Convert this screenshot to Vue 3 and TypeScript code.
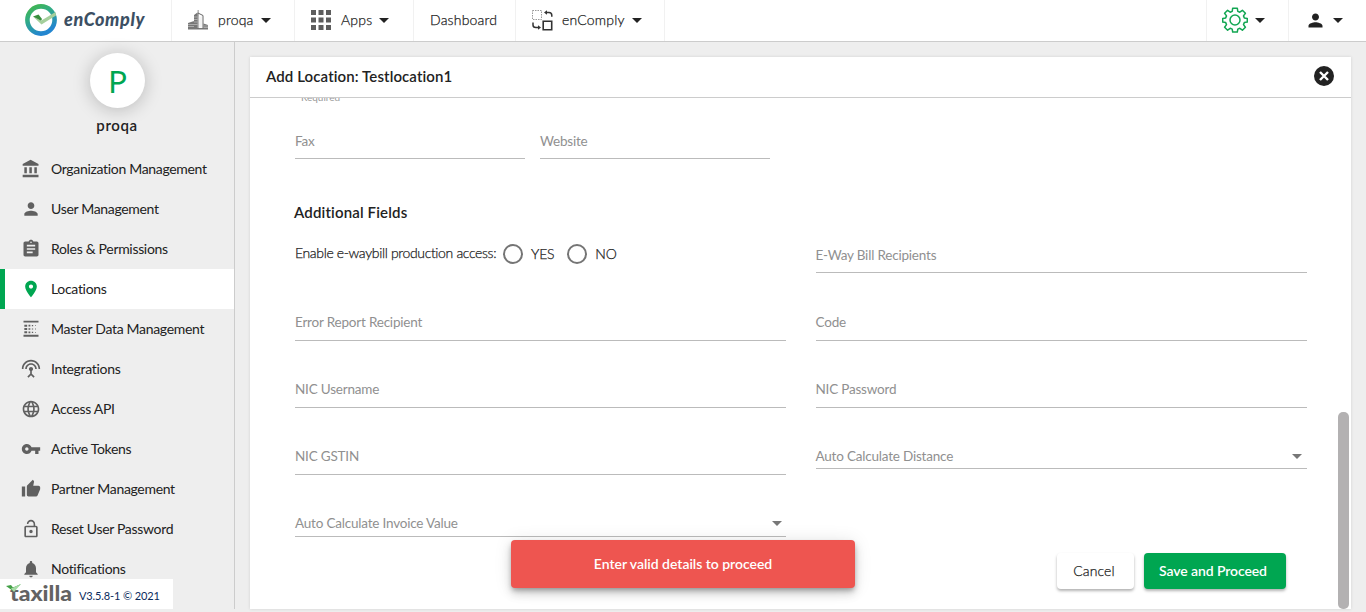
<script setup lang="ts">
interface NavItem { label: string; icon: string; active?: boolean }
interface Field { label: string; select?: boolean }

const navItems: NavItem[] = [
  { label: 'Organization Management', icon: 'bank' },
  { label: 'User Management', icon: 'user' },
  { label: 'Roles & Permissions', icon: 'clipboard' },
  { label: 'Locations', icon: 'pin', active: true },
  { label: 'Master Data Management', icon: 'data' },
  { label: 'Integrations', icon: 'antenna' },
  { label: 'Access API', icon: 'globe' },
  { label: 'Active Tokens', icon: 'key' },
  { label: 'Partner Management', icon: 'thumb' },
  { label: 'Reset User Password', icon: 'lock' },
  { label: 'Notifications', icon: 'bell' },
]

const icons: Record<string, string> = {
  bank: 'M4 10v7h3v-7H4zm6 0v7h3v-7h-3zM2 22h19v-3H2v3zm14-12v7h3v-7h-3zm-4.500-9L2 6v2h19V6l-9.500-5z',
  user: 'M12 12c2.210 0 4-1.790 4-4s-1.790-4-4-4-4 1.790-4 4 1.790 4 4 4zm0 2c-2.670 0-8 1.340-8 4v2h16v-2c0-2.660-5.330-4-8-4z',
  clipboard: 'M19 3h-4.180C14.400 1.840 13.300 1 12 1c-1.300 0-2.400.84-2.820 2H5c-1.100 0-2 .9-2 2v14c0 1.100.9 2 2 2h14c1.100 0 2-.9 2-2V5c0-1.100-.9-2-2-2zm-7 0c.55 0 1 .45 1 1s-.45 1-1 1-1-.45-1-1 .45-1 1-1zm2 14H7v-2h7v2zm3-4H7v-2h10v2zm0-4H7V7h10v2z',
  pin: 'M12 2C8.130 2 5 5.130 5 9c0 5.250 7 13 7 13s7-7.750 7-13c0-3.870-3.130-7-7-7zm0 9.500c-1.380 0-2.500-1.120-2.500-2.500s1.120-2.500 2.500-2.500 2.500 1.120 2.500 2.500-1.120 2.500-2.500 2.500z',
  data: 'M3 2h18v2.200H3zM3 19h18v2.200H3zM4 6.800h3.400v2.400H4zM4 10.800h3.400v2.400H4zM4 14.800h3.400v2.400H4zM9 7h2.200v2H9zM9 11h2.200v2H9zM9 15h2.200v2H9zM13 7.300h1.600v1.400H13zM13 11.300h1.600v1.400H13zM13 15.300h1.600v1.400H13zM17 7.500h1v1h-1zM17 11.500h1v1h-1zM17 15.500h1v1h-1z',
  antenna: 'M12 5c-3.870 0-7 3.130-7 7h2c0-2.760 2.240-5 5-5s5 2.240 5 5h2c0-3.870-3.130-7-7-7zm1 9.290c.88-.39 1.500-1.260 1.500-2.290 0-1.380-1.120-2.500-2.500-2.500S9.500 10.620 9.500 12c0 1.020.62 1.900 1.500 2.290v3.300L7.590 21 9 22.410l3-3 3 3L16.410 21 13 17.590v-3.300zM12 1C5.930 1 1 5.930 1 12h2c0-4.970 4.030-9 9-9s9 4.030 9 9h2c0-6.070-4.930-11-11-11z',
  globe: 'M11.990 2C6.470 2 2 6.480 2 12s4.470 10 9.990 10C17.520 22 22 17.520 22 12S17.520 2 11.990 2zm6.930 6h-2.950c-.32-1.250-.78-2.450-1.380-3.560 1.840.63 3.370 1.910 4.330 3.560zM12 4.040c.83 1.200 1.480 2.530 1.910 3.960h-3.820c.43-1.430 1.080-2.760 1.910-3.960zM4.260 14C4.100 13.360 4 12.690 4 12s.1-1.360.26-2h3.380c-.08.66-.14 1.320-.14 2s.06 1.340.14 2H4.260zm.82 2h2.950c.32 1.250.78 2.450 1.380 3.560-1.840-.63-3.370-1.900-4.330-3.560zm2.950-8H5.080c.96-1.660 2.490-2.930 4.330-3.560C8.810 5.550 8.350 6.750 8.030 8zM12 19.960c-.83-1.200-1.480-2.530-1.910-3.960h3.820c-.43 1.430-1.080 2.760-1.910 3.960zM14.340 14H9.660c-.09-.66-.16-1.320-.16-2s.07-1.350.16-2h4.680c.09.65.16 1.320.16 2s-.07 1.340-.16 2zm.25 5.560c.6-1.110 1.060-2.310 1.380-3.560h2.950c-.96 1.650-2.490 2.930-4.330 3.560zM16.360 14c.08-.66.14-1.320.14-2s-.06-1.340-.14-2h3.380c.16.64.26 1.310.26 2s-.1 1.360-.26 2h-3.380z',
  key: 'M12.650 10C11.830 7.670 9.610 6 7 6c-3.310 0-6 2.690-6 6s2.690 6 6 6c2.610 0 4.830-1.670 5.650-4H17v4h4v-4h2v-4H12.650zM7 14c-1.100 0-2-.9-2-2s.9-2 2-2 2 .9 2 2-.9 2-2 2z',
  thumb: 'M1 21h4V9H1v12zm22-11c0-1.100-.9-2-2-2h-6.310l.95-4.570.03-.32c0-.41-.17-.79-.44-1.060L14.170 1 7.590 7.590C7.220 7.950 7 8.450 7 9v10c0 1.100.9 2 2 2h9c.83 0 1.540-.5 1.840-1.220l3.020-7.050c.09-.23.14-.47.14-.73v-2z',
  lock: 'M12 17c1.100 0 2-.9 2-2s-.9-2-2-2-2 .9-2 2 .9 2 2 2zm6-9h-1V6c0-2.760-2.240-5-5-5S7 3.240 7 6h1.900c0-1.710 1.390-3.100 3.100-3.100 1.710 0 3.100 1.390 3.100 3.100v2H6c-1.100 0-2 .9-2 2v10c0 1.100.9 2 2 2h12c1.100 0 2-.9 2-2V10c0-1.100-.9-2-2-2zm0 12H6V10h12v10z',
  bell: 'M12 22c1.100 0 2-.9 2-2h-4c0 1.100.9 2 2 2zm6-6v-5c0-3.070-1.640-5.640-4.500-6.320V4c0-.83-.67-1.500-1.500-1.500s-1.500.67-1.500 1.500v.68C7.630 5.360 6 7.920 6 11v5l-2 2v1h16v-1l-2-2z',
}

const leftFields: Field[] = [
  { label: 'Error Report Recipient' },
  { label: 'NIC Username' },
  { label: 'NIC GSTIN' },
  { label: 'Auto Calculate Invoice Value', select: true },
]
const rightFields: Field[] = [
  { label: 'E-Way Bill Recipients' },
  { label: 'Code' },
  { label: 'NIC Password' },
  { label: 'Auto Calculate Distance', select: true },
]
</script>

<template>
  <div class="page">
    <header class="topbar">
      <div class="brand">
        <svg class="brand-mark" width="33" height="32" viewBox="0 0 33 32">
          <defs>
            <linearGradient id="ring" x1="0" y1="0" x2="0.5" y2="1">
              <stop offset="0" stop-color="#43b649" /><stop offset="0.4" stop-color="#32ad83" /><stop offset="1" stop-color="#2386d0" />
            </linearGradient>
          </defs>
          <circle cx="16" cy="16" r="13.600" fill="#fff" stroke="url(#ring)" stroke-width="4.600" />
          <path d="M8 12.500l8 4.200L30.500 8l.5 3.500L16.500 20.500z" fill="#a5cf9c" />
          <path d="M8 12.500l5.500-2L17 15l-1 1.700z" fill="#388e3c" />
        </svg>
        <span class="brand-name">enComply</span>
      </div>
      <div class="cell org">
        <svg class="org-icon" width="20" height="21" viewBox="0 0 20 21">
          <path d="M9.700 0h.8v3h-.8zM6 5l3.500-2.500V18.500H6zM0 13l6-2v8H0zM15.500 13.500L20 15v4h-4.500zM0 18h20v1.600H0z" fill="#777" />
          <path d="M10 3l5 2.500v13M10 3v15.500" fill="none" stroke="#666" />
          <path d="M11 6.500v11M13 6.500v11" stroke="#ccc" stroke-width=".5" />
          <path d="M0 14.500h6M0 16.500h6M16 16h4M16 17.500h4M6 7h3.500M6 9.500h3.500M6 12h3.500M6 14.500h3.500" stroke="#ccc" stroke-width=".6" />
        </svg>
        <span>proqa</span><i class="caret"></i>
      </div>
      <div class="cell apps">
        <svg width="20" height="20" viewBox="0 0 20 20" fill="#5d5d5d">
          <path d="M0 0h5v5H0zM7.500 0h5v5h-5zM15 0h5v5h-5zM0 7.500h5v5H0zM7.500 7.500h5v5h-5zM15 7.500h5v5h-5zM0 15h5v5H0zM7.500 15h5v5h-5zM15 15h5v5h-5z" />
        </svg>
        <span>Apps</span><i class="caret"></i>
      </div>
      <div class="cell dash"><span>Dashboard</span></div>
      <div class="cell product">
        <svg width="21" height="21" viewBox="0 0 21 21" fill="none" stroke="#333">
          <path d="M.5.500h9v9h-9z" stroke-dasharray="1.500 1" stroke="#999" />
          <path d="M11.200 11.200h8.500v8.500h-8.500z" stroke-width="1.600" />
          <path d="M14 2.500h3q2.800 0 2.800 2.800v1.400M1 12.500V15q0 2.500 2.800 2.500h3" stroke-width="1.500" />
          <path d="M15 .2v4.600l-3-2.300zM6 15.200v4.600l3-2.300z" fill="#333" stroke="none" />
        </svg>
        <span>enComply</span><i class="caret"></i>
      </div>
      <div class="spacer"></div>
      <div class="cell settings">
        <svg width="26" height="26" viewBox="0 0 26 26" fill="none" stroke="#12a652" stroke-width="1.500" stroke-linejoin="round">
          <path d="M10.700 1.200h4.600l.5 3.200 2 .8 2.600-1.900 3 3-1.900 2.600.8 2 3 .5v3.700l-3 .5-.8 2 1.900 2.600-3 3-2.600-1.900-2 .8-.5 3h-4.600l-.5-3-2-.8-2.600 1.900-3-3 1.900-2.600-.8-2-3-.5v-3.700l3-.5.8-2-1.900-2.600 3-3 2.600 1.900 2-.8z" />
          <circle cx="13" cy="13" r="5" />
        </svg>
        <i class="caret"></i>
      </div>
      <div class="cell profile">
        <svg width="21" height="21" viewBox="0 0 24 24" fill="#222"><path :d="icons.user" /></svg>
        <i class="caret"></i>
      </div>
    </header>

    <div class="main">
      <aside class="sidebar">
        <div class="avatar">P</div>
        <div class="org-name">proqa</div>
        <nav>
          <a v-for="item in navItems" :key="item.label" class="nav-item" :class="{ active: item.active }">
            <svg class="nav-icon" viewBox="0 0 24 24"><path :d="icons[item.icon]" /></svg>
            <span>{{ item.label }}</span>
          </a>
        </nav>
        <div class="version">
          <svg class="taxilla" width="70" height="26" viewBox="0 0 70 26">
            <text x="4" y="19.500" textLength="62" lengthAdjust="spacingAndGlyphs">taxilla</text>
            <path d="M0 5l5-1 2 2.500L15 3 7 10z" fill="#43a047" />
            <path d="M5 7.500L15 3l-7 8z" fill="#a5dba5" />
          </svg>
          <span>V3.5.8-1 © 2021</span>
        </div>
      </aside>

      <section class="card">
        <div class="card-head">
          <h1>Add Location: Testlocation1</h1>
          <svg width="20" height="20" viewBox="0 0 20 20"><circle cx="10" cy="10" r="10" fill="#222" /><path d="M6 6l8 8M14 6l-8 8" stroke="#fff" stroke-width="2.400" /></svg>
        </div>
        <div class="card-body">
          <div class="hint">Required</div>
          <div class="contact-row">
            <div class="field">Fax</div>
            <div class="field">Website</div>
          </div>
          <h2>Additional Fields</h2>
          <div class="columns">
            <div class="column left">
              <div class="access">
                <span class="question">Enable e-waybill production access:</span>
                <i class="radio"></i><span class="option">YES</span>
                <i class="radio second"></i><span class="option">NO</span>
              </div>
              <div v-for="f in leftFields" :key="f.label" class="slot">
                <div class="field" :class="{ select: f.select }"><span>{{ f.label }}</span><i v-if="f.select" class="caret gray"></i></div>
              </div>
            </div>
            <div class="column right">
              <div v-for="f in rightFields" :key="f.label" class="slot">
                <div class="field" :class="{ select: f.select }"><span>{{ f.label }}</span><i v-if="f.select" class="caret gray"></i></div>
              </div>
            </div>
          </div>
          <div class="actions">
            <button class="cancel">Cancel</button>
            <button class="save">Save and Proceed</button>
          </div>
        </div>
        <div class="scroll-thumb"></div>
      </section>
    </div>
    <div class="toast">Enter valid details to proceed</div>
  </div>
</template>

<style>
body { margin: 0; background: #eee; overflow: hidden; }
</style>

<style scoped>
* { box-sizing: border-box; }
.page { position: relative; height: 612px; overflow: hidden; background: #eee; color: #222; font: 14px/20px Lato, sans-serif; display: flex; flex-direction: column; }
.topbar { height: 42px; flex: none; display: flex; background: #fff; border-bottom: 1px solid #ccc; }
.brand { width: 171px; display: flex; padding-left: 25px; }
.brand-mark { margin-top: 4px; flex: none; }
.brand-name { margin: 8px 0 0 6px; font-size: 18px; line-height: 22px; font-weight: 900; font-style: italic; color: #3c4f63; letter-spacing: .6px; }
.cell { display: flex; align-items: center; border-left: 1px solid #f1f1f1; height: 41px; padding-bottom: 1px; color: #222; font-weight: 300; letter-spacing: .2px; -webkit-text-stroke: .25px; }
.org { width: 123px; padding-left: 16px; }
.org span { margin-left: 10px; }
.apps { width: 119px; padding-left: 16px; }
.apps span { margin-left: 10px; }
.dash { width: 102px; padding-left: 16px; }
.product { width: 150px; padding-left: 16px; border-right: 1px solid #f1f1f1; }
.product span { margin-left: 9px; }
.spacer { flex: 1; }
.settings { width: 82px; padding-left: 15px; }
.profile { width: 78px; padding-left: 16px; }
.caret { width: 0; height: 0; border: 5px solid transparent; border-top-color: #222; border-bottom: 0; margin-left: 7px; }
.caret.gray { border-top-color: #777; margin: 0 5px 0 auto; }
.main { display: flex; height: 567px; }
.sidebar { position: relative; width: 235px; flex: none; border-right: 1px solid #ccc; padding-top: 11px; }
.avatar { width: 55px; height: 55px; margin: 0 auto 0 90px; border-radius: 50%; background: #fff; color: #00a651; font-size: 31px; line-height: 57px; text-align: center; box-shadow: 0 2px 18px rgba(0, 0, 0, .22); }
.org-name { margin-top: 7px; text-align: center; font-size: 15px; line-height: 20px; font-weight: 600; letter-spacing: .6px; }
nav { margin-top: 14px; height: 460px; overflow: hidden; }
.nav-item { display: flex; align-items: center; height: 40px; padding-left: 16px; border-left: 5px solid transparent; letter-spacing: -.32px; }
.nav-item.active { background: #fff; border-left-color: #00a651; }
.nav-icon { width: 20px; height: 20px; margin-right: 10px; fill: #606060; }
.active .nav-icon { fill: #00a651; }
.version { position: absolute; left: 0; bottom: 0; width: 173px; height: 30px; background: #fff; display: flex; align-items: center; padding-left: 6px; font-size: 11px; color: #0b2a5c; }
.version span { margin: 4px 0 0 3px; white-space: nowrap; letter-spacing: -.12px; }
.taxilla text { font: 900 21px Lato, sans-serif; fill: #636363; }
.card { position: relative; width: 1101px; height: 552px; margin: 15px 0 0 15px; background: #fff; box-shadow: 0 0 3px rgba(0, 0, 0, .12); }
.card-head { height: 41px; padding: 0 17.500px 2px 16px; border-bottom: 1px solid #ccc; display: flex; align-items: center; justify-content: space-between; }
h1, h2 { margin: 0; font-size: 15px; line-height: 20px; font-weight: 600; letter-spacing: .11px; }
.card-body { height: 511px; overflow: hidden; padding: 0 44px 0 45px; }
.hint { font-size: 10px; line-height: 12px; height: 7px; margin: -7px 0 0 6px; color: #999; }
.contact-row { display: flex; gap: 15px; margin-top: 33px; }
.contact-row .field { width: 230px; height: 28px; }
.field { height: 29px; border-bottom: 1px solid #bbb; color: #909090; line-height: 21px; font-size: 13.500px; letter-spacing: -.2px; }
.field.select { height: 23px; display: flex; align-items: center; padding-bottom: 1px; }
h2 { margin: 43px 0 0 -1px; letter-spacing: .16px; }
.columns { display: flex; justify-content: space-between; margin-top: 23px; }
.column { width: 491.500px; }
.left .field { width: 491px; }
.left .field.select { height: 24px; padding-bottom: 2px; }
.left .caret.gray { margin-right: 4px; }
.right .slot:first-child .field { height: 28px; }
.access { display: flex; align-items: center; height: 67px; padding-bottom: 49px; }
.question { width: 208px; padding-bottom: 2px; font-size: 14px; font-weight: 300; white-space: nowrap; letter-spacing: -.35px; -webkit-text-stroke: .25px; }
.radio { width: 20px; height: 20px; border: 2px solid #757575; border-radius: 50%; flex: none; }
.option { margin-left: 8px; font-size: 14px; font-weight: 300; letter-spacing: -.2px; -webkit-text-stroke: .25px; }
.radio.second { margin-left: 13px; }
.slot { height: 67px; }
.actions { display: flex; justify-content: flex-end; gap: 10px; margin: -27px 21px 0 0; }
button { height: 36px; padding: 0; border: 0; border-radius: 4px; font: 14px/36px Lato, sans-serif; box-shadow: 0 2px 3px rgba(0, 0, 0, .3); }
.cancel { width: 77px; padding-right: 3px; background: #fff; color: #222; font-weight: 300; letter-spacing: .1px; -webkit-text-stroke: .25px; }
.save { width: 142px; padding-right: 4px; background: #00a651; color: #fff; font-weight: 600; letter-spacing: -.1px; }
.scroll-thumb { position: absolute; right: 2px; bottom: 0; width: 11px; height: 197px; border-radius: 5px; background: #b3b1b2; }
.toast { position: absolute; left: 511px; top: 540px; width: 344px; height: 48px; border-radius: 4px; background: #ee5550; color: #fff; text-align: center; font-weight: 600; line-height: 48px; letter-spacing: -.03px; box-shadow: 0 3px 5px -1px rgba(0, 0, 0, .3), 0 6px 10px rgba(0, 0, 0, .15), 0 1px 18px rgba(0, 0, 0, .1); }
</style>
